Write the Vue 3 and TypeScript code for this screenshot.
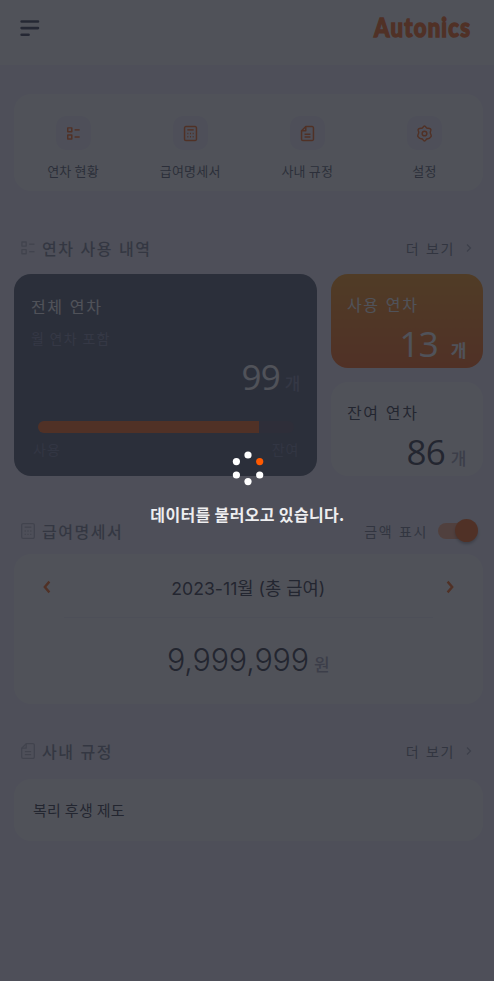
<script setup lang="ts">
import { computed, ref } from 'vue'

type IconName = 'list' | 'calc' | 'doc' | 'gear'

interface MenuItem {
  icon: IconName
  label: string
}

const menu: MenuItem[] = [
  { icon: 'list', label: '연차 현황' },
  { icon: 'calc', label: '급여명세서' },
  { icon: 'doc', label: '사내 규정' },
  { icon: 'gear', label: '설정' },
]

const paths: Record<IconName, string[]> = {
  list: [
    'M2.6 2.7h3.8v3.6H2.6z',
    'M2.6 9.5h3.8v3.6H2.6z',
    'M9 4.6h4.8',
    'M9 11.3h4.8',
  ],
  calc: [
    'M3.6 1.5h8.8a1.2 1.2 0 0 1 1.2 1.2v10.6a1.2 1.2 0 0 1-1.2 1.2H3.6a1.2 1.2 0 0 1-1.2-1.2V2.7a1.2 1.2 0 0 1 1.2-1.2z',
    'M5 4.6h6',
    'M5 8h1M7.5 8h1M10 8h1M5 11h1M7.5 11h1M10 11h1',
  ],
  doc: [
    'M6.4 1.5h6a1.2 1.2 0 0 1 1.2 1.2v10.6a1.2 1.2 0 0 1-1.2 1.2H3.6a1.2 1.2 0 0 1-1.2-1.2V5.5z',
    'M6.4 1.5v4H2.4',
    'M5.2 8.6h5.6M5.2 11.2h5.6',
  ],
  gear: [
    'M6.5 2.2Q8 -.4 9.5 2.2Q10 3.2 11.1 3.1Q14.6 3 13.9 5.2Q12.9 6.9 13.6 8Q14.9 10.4 13.9 11.1Q13 13 11.1 12.9Q10 12.8 9.5 13.8Q8 16.4 6.5 13.8Q6 12.8 4.9 12.9Q3 13 2.1 11.1Q1.1 10.4 2.4 8Q3.1 6.9 2.1 5.2Q1.4 3 4.9 3.1Q6 3.2 6.5 2.2z',
    'M8 5.8a2.2 2.2 0 1 1 0 4.4 2.2 2.2 0 0 1 0-4.4z',
  ],
}

const total = ref(99)
const used = ref(13)
const remain = computed(() => total.value - used.value)
const fill = ref(86.5)
const amount = ref(9999999)
const amountText = computed(() => amount.value.toLocaleString('en-US'))

const dots = [
  { x: 16, y: 4 },
  { x: 27.7, y: 10.6, active: true },
  { x: 27.7, y: 24 },
  { x: 16, y: 30.6 },
  { x: 4.4, y: 24 },
  { x: 4.4, y: 10.6 },
]
</script>

<template>
  <div class="page">
    <header class="header">
      <svg class="burger" viewBox="0 0 20 18" width="20" height="18">
        <path d="M1.6 2.5h16.4M1.6 9.1h16.4M1.6 15.8h7" />
      </svg>
      <svg class="logo" viewBox="0 0 104 36" width="104" height="36">
        <text x="3.5" y="27.5" transform="scale(0.85 1)" textLength="113">Autonics</text>
      </svg>
    </header>

    <main class="content">
      <nav class="card menu">
        <a v-for="m in menu" :key="m.label" class="menu-item">
          <span class="tile">
            <svg viewBox="0 0 16 16" width="17" height="17" class="icon">
              <path v-for="d in paths[m.icon]" :key="d" :d="d" />
            </svg>
          </span>
          <span class="menu-label">{{ m.label }}</span>
        </a>
      </nav>

      <div class="section-head leave-head">
        <svg viewBox="0 0 16 16" width="18" height="18" class="icon muted">
          <path v-for="d in paths.list" :key="d" :d="d" />
        </svg>
        <h2>연차 사용 내역</h2>
        <a class="more">더 보기</a>
        <svg class="more-arrow" viewBox="0 0 8 12" width="8" height="12"><path d="M2 2.5 5.5 6 2 9.5" /></svg>
      </div>

      <section class="leave">
        <div class="total">
          <h3>전체 연차</h3>
          <p class="sub">월 연차 포함</p>
          <p class="count"><span class="num">{{ total }}</span><span class="unit">개</span></p>
          <div class="bar"><div class="bar-fill" :style="{ width: fill + '%' }"></div></div>
          <div class="legend"><span>사용</span><span>잔여</span></div>
        </div>
        <div class="side">
          <div class="mini used">
            <h3>사용 연차</h3>
            <p class="count"><span class="num">{{ used }}</span><span class="unit">개</span></p>
          </div>
          <div class="mini remain">
            <h3>잔여 연차</h3>
            <p class="count"><span class="num">{{ remain }}</span><span class="unit">개</span></p>
          </div>
        </div>
      </section>

      <div class="section-head pay-head">
        <svg viewBox="0 0 16 16" width="18" height="18" class="icon muted">
          <path v-for="d in paths.calc" :key="d" :d="d" />
        </svg>
        <h2>급여명세서</h2>
        <span class="toggle-label">금액 표시</span>
        <span class="toggle"><span class="thumb"></span></span>
      </div>

      <section class="card pay">
        <div class="month">
          <svg class="arrow" viewBox="0 0 10 16" width="10" height="16"><path d="M7.4 2.6 2.8 8l4.6 5.4" /></svg>
          <span class="month-text">2023-11월 (총 급여)</span>
          <svg class="arrow" viewBox="0 0 10 16" width="10" height="16"><path d="M2.6 2.6 7.2 8l-4.6 5.4" /></svg>
        </div>
        <div class="divider"></div>
        <p class="amount"><span class="amount-num">{{ amountText }}</span><span class="unit">원</span></p>
      </section>

      <div class="section-head rule-head">
        <svg viewBox="0 0 16 16" width="18" height="18" class="icon muted">
          <path v-for="d in paths.doc" :key="d" :d="d" />
        </svg>
        <h2>사내 규정</h2>
        <a class="more">더 보기</a>
        <svg class="more-arrow" viewBox="0 0 8 12" width="8" height="12"><path d="M2 2.5 5.5 6 2 9.5" /></svg>
      </div>

      <section class="card rule">복리 후생 제도</section>
    </main>

    <div class="overlay">
      <svg class="spinner" viewBox="0 0 32 35" width="32" height="35">
        <circle v-for="(d, i) in dots" :key="i" :cx="d.x" :cy="d.y" r="3.6" :class="{ active: d.active }" />
      </svg>
      <p class="loading">데이터를 불러오고 있습니다.</p>
    </div>
  </div>
</template>

<style>
body {
  margin: 0;
  background: #4e4f5a;
}
</style>

<style scoped>
.page {
  position: relative;
  height: 981px;
  overflow: hidden;
  background: #f3f0fd;
  font-family: 'Noto Sans CJK KR', sans-serif;
  color: #1f2533;
}
h2, h3, p {
  margin: 0;
  font-weight: 400;
}
.header {
  box-sizing: border-box;
  height: 65px;
  padding: 10px 19px 0 20px;
  display: flex;
  justify-content: space-between;
  align-items: flex-start;
  background: #fff;
}
.burger {
  margin-top: 8.5px;
  fill: none;
  stroke: #2c3048;
  stroke-width: 2.6;
  stroke-linecap: round;
}
.logo {
  overflow: visible;
}
.logo text {
  font-family: Lato, sans-serif;
  font-weight: 900;
  font-size: 26px;
  fill: #ff5a00;
  stroke: #ff5a00;
  stroke-width: 1.4;
}
.content {
  padding: 29px 11.5px 0 14px;
}
.card {
  background: #fff;
  border-radius: 17px;
}
.menu {
  height: 97px;
  display: grid;
  grid-template-columns: repeat(4, 1fr);
}
.menu-item {
  display: flex;
  flex-direction: column;
  align-items: center;
  padding: 22px 0 0 1px;
}
.tile {
  width: 35px;
  height: 34px;
  border-radius: 10px;
  background: #f3f0fd;
  display: flex;
  align-items: center;
  justify-content: center;
}
.icon {
  fill: none;
  stroke: #ff5a00;
  stroke-width: 1.4;
  stroke-linejoin: round;
}
.icon.muted {
  stroke: #b4b4c4;
  stroke-width: 1.2;
}
.menu-label {
  margin-top: 11px;
  font-size: 13px;
  line-height: 20px;
  letter-spacing: 0.2px;
  color: #4b5263;
}
.section-head {
  display: flex;
  align-items: center;
  height: 24px;
  padding: 0 9.5px 0 5px;
}
.section-head h2 {
  margin-left: 5px;
  flex: 1;
  font-size: 16px;
  line-height: 23px;
  letter-spacing: 1.5px;
  word-spacing: 1px;
  font-weight: 500;
  color: #747b8c;
}
.leave-head {
  margin-top: 45px;
}
.more, .toggle-label {
  font-size: 14px;
  letter-spacing: 1.6px;
  word-spacing: 1px;
  color: #6a7182;
}
.more-arrow {
  margin-left: 10px;
  fill: none;
  stroke: #a0a0b4;
  stroke-width: 1.3;
}
.leave {
  margin-top: 14px;
  height: 202px;
  display: flex;
  gap: 14px;
}
.total {
  box-sizing: border-box;
  width: 302.5px;
  border-radius: 17px;
  background: #464f64;
  padding: 20px 16px 0 17px;
}
h3 {
  font-size: 16px;
  line-height: 24px;
  letter-spacing: 1.6px;
  word-spacing: 1px;
}
.total h3 {
  color: #fff;
}
.sub {
  margin-top: 10px;
  font-size: 14px;
  line-height: 20px;
  letter-spacing: 1.3px;
  color: #787e9c;
}
.count {
  display: flex;
  align-items: baseline;
  justify-content: flex-end;
  line-height: 40px;
}
.num {
  font-family: 'Open Sans', sans-serif;
  font-size: 35px;
  letter-spacing: -0.8px;
}
.unit {
  font-size: 17px;
  font-weight: 500;
  color: #9a9ab0;
}
.total .num {
  color: #fff;
}
.total .count {
  margin-top: 9px;
}
.total .unit {
  margin-left: 5px;
  color: #787e9c;
}
.bar {
  margin: 18px 7px 0;
  height: 12px;
  border-radius: 6px;
  overflow: hidden;
  background: #554a60;
}
.bar-fill {
  height: 100%;
  background: #ff5a00;
}
.legend {
  display: flex;
  justify-content: space-between;
  margin: 6px 1px 0 2px;
  font-size: 14px;
  line-height: 20px;
  letter-spacing: 1px;
  color: #6c7290;
}
.side {
  flex: 1;
  display: flex;
  flex-direction: column;
  gap: 14px;
}
.mini {
  flex: 1 1 0;
  min-height: 0;
  box-sizing: border-box;
  border-radius: 17px;
  padding: 18px 16px 0 16.5px;
}
.mini .count {
  margin-top: 8px;
}
.mini .unit {
  margin-left: 6px;
}
.used {
  background: linear-gradient(#ff9100, #ff5a00);
  color: #fff;
}
.mini.used .unit {
  margin-left: 13px;
  font-weight: 700;
  color: #fff;
}
.remain {
  background: #fff;
}
.pay-head {
  margin-top: 43px;
  padding-right: 8.5px;
}
.toggle {
  position: relative;
  margin-left: 10px;
  width: 36px;
  height: 16px;
  border-radius: 8px;
  background: #ffa377;
}
.thumb {
  position: absolute;
  right: -4px;
  top: -4px;
  width: 23px;
  height: 23px;
  border-radius: 50%;
  background: #ff5a00;
  box-shadow: 0 2px 3px rgba(0, 0, 0, 0.35);
}
.pay {
  margin-top: 11px;
  height: 150px;
}
.month {
  display: flex;
  align-items: center;
  justify-content: space-between;
  height: 63px;
  padding: 3px 27.5px 0;
  box-sizing: border-box;
}
.arrow {
  fill: none;
  stroke: #ff5a00;
  stroke-width: 2.4;
}
.month-text {
  font-family: Inter, 'Noto Sans CJK KR', sans-serif;
  font-size: 17.7px;
}
.divider {
  height: 1px;
  margin: 0 50px;
  background: #efeffb;
}
.amount {
  display: flex;
  align-items: baseline;
  justify-content: center;
  margin-top: 20px;
  line-height: 44px;
}
.amount-num {
  font-family: Inter, sans-serif;
  font-size: 30.5px;
  font-weight: 300;
  letter-spacing: -0.2px;
}
.amount .unit {
  margin-left: 5px;
}
.rule-head {
  margin-top: 35px;
}
.rule {
  margin-top: 16px;
  height: 62px;
  box-sizing: border-box;
  padding-left: 19px;
  font-size: 15px;
  letter-spacing: 0.3px;
  line-height: 61px;
}
.overlay {
  position: absolute;
  inset: 0;
  background: rgba(36, 39, 47, 0.8);
  display: flex;
  flex-direction: column;
  align-items: center;
  padding-top: 451px;
  padding-left: 1px;
}
.spinner {
  fill: #fff;
}
.spinner .active {
  fill: #ff5a00;
}
.loading {
  margin-top: 17px;
  font-size: 16px;
  line-height: 23px;
  font-weight: 700;
  letter-spacing: 0.35px;
  color: #eeeef0;
}
</style>
